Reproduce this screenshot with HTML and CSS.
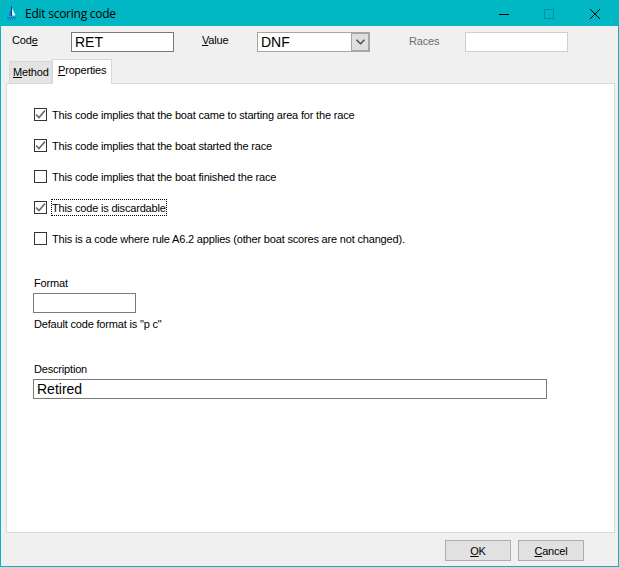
FILE: index.html
```html
<!DOCTYPE html>
<html lang="en">
<head>
<meta charset="utf-8">
<title>Edit scoring code</title>
<link rel="stylesheet" href="styles.css">
</head>
<body>
<div class="window">
  <header class="titlebar">
    <svg class="appicon" width="16" height="16" viewBox="0 0 16 16"><path d="M7 1.5 L8 1.5 L8 11 L7 11 Z" fill="#1a2fb0"/><path d="M8 3 L11.5 10.5 L8 10.5 Z" fill="#f4f8ff"/><path d="M6.5 4 L6.5 10.5 L5 10.5 Z" fill="#2a46d0"/><path d="M3 12.5 H12 M4 14 H11" stroke="#2a46d0" stroke-width="1" stroke-dasharray="1 1"/></svg>
    <span class="title">Edit scoring code</span>
    <div class="winbtns">
      <svg class="winbtn" width="46" height="25" viewBox="0 0 46 25"><path d="M18 13.5 H28" stroke="#000"/></svg>
      <svg class="winbtn" width="46" height="25" viewBox="0 0 46 25"><rect x="17.5" y="8.5" width="9" height="9" fill="none" stroke="#0092a0"/></svg>
      <svg class="winbtn" width="46" height="25" viewBox="0 0 46 25"><path d="M17 8 L27 18 M27 8 L17 18" stroke="#000" fill="none"/></svg>
    </div>
  </header>
  <div class="toprow">
    <label class="lbl lbl-code">Cod<u>e</u></label>
    <div class="field field-code">RET</div>
    <label class="lbl lbl-value"><u>V</u>alue</label>
    <div class="combo">
      <span class="combo-text">DNF</span>
      <span class="combo-btn"><svg width="9" height="6" viewBox="0 0 9 6"><path d="M0.5 0.8 L4.5 4.8 L8.5 0.8" fill="none" stroke="#444" stroke-width="1.3"/></svg></span>
    </div>
    <label class="lbl lbl-races">Races</label>
    <div class="field field-races"></div>
  </div>
  <div class="tabs">
    <div class="tab tab-off"><u>M</u>ethod</div>
    <div class="tab tab-on"><u>P</u>roperties</div>
  </div>
  <main class="page">
    <div class="checks">
      <div class="check"><span class="box"><svg width="11" height="11" viewBox="0 0 11 11"><path d="M1 5.5 L4 8.5 L10 1.5" fill="none" stroke="#666" stroke-width="1.6"/></svg></span><span class="txt">This code implies that the boat came to starting area for the race</span></div>
      <div class="check"><span class="box"><svg width="11" height="11" viewBox="0 0 11 11"><path d="M1 5.5 L4 8.5 L10 1.5" fill="none" stroke="#666" stroke-width="1.6"/></svg></span><span class="txt">This code implies that the boat started the race</span></div>
      <div class="check"><span class="box"></span><span class="txt">This code implies that the boat finished the race</span></div>
      <div class="check"><span class="box"><svg width="11" height="11" viewBox="0 0 11 11"><path d="M1 5.5 L4 8.5 L10 1.5" fill="none" stroke="#666" stroke-width="1.6"/></svg></span><span class="txt focused">This code is discardable</span></div>
      <div class="check"><span class="box"></span><span class="txt">This is a code where rule A6.2 applies (other boat scores are not changed).</span></div>
    </div>
    <div class="format">
      <div class="cap">Format</div>
      <div class="field field-format"></div>
      <div class="hint">Default code format is "p c"</div>
    </div>
    <div class="desc">
      <div class="cap">Description</div>
      <div class="field field-desc">Retired</div>
    </div>
  </main>
  <footer class="footer">
    <button class="btn btn-ok"><u>O</u>K</button>
    <button class="btn btn-cancel"><u>C</u>ancel</button>
  </footer>
</div>
</body>
</html>
```
FILE: styles.css
```css
* { box-sizing: border-box; }
html, body { margin: 0; padding: 0; }
body { width: 619px; height: 567px; overflow: hidden; font-family: "Liberation Sans", Arial, sans-serif; font-size: 11px; letter-spacing: -0.18px; color: #000; }
.window { width: 619px; height: 567px; background: #f0f0f0; border: 1px solid #00b7c3; border-top: 0; display: flex; flex-direction: column; }
.titlebar { height: 26px; background: #00b7c3; display: flex; align-items: center; margin: 0 -1px; padding-left: 4px; flex: none; }
.appicon { flex: none; }
.title { font-family: "Open Sans", sans-serif; font-size: 12px; letter-spacing: -0.25px; margin-left: 5px; color: #000; }
.winbtns { margin-left: auto; display: flex; }
.winbtn { display: block; }
.toprow { display: flex; align-items: flex-start; height: 31px; padding: 6px 0 0 11px; flex: none; }
.lbl { line-height: 14px; padding-top: 1px; }
.lbl-code { width: 59px; }
.lbl-value { width: 55px; margin-left: 28px; }
.lbl-races { width: 56px; margin-left: 39px; color: #6d6d6d; padding-top: 2px; }
.field { background: #fff; border: 1px solid #7a7a7a; font-size: 14px; letter-spacing: 0; line-height: 18px; padding-left: 3px; height: 20px; }
.field-code { width: 103px; }
.field-races { width: 103px; border-color: #cfcfcf; }
.combo { width: 113px; height: 20px; background: #fff; border: 1px solid #a6a6a6; display: flex; font-size: 14px; letter-spacing: 0; line-height: 18px; padding-left: 3px; }
.combo-text { flex: 1; }
.combo-btn { width: 19px; height: 20px; margin: -1px -1px 0 0; background: #dedede; border: 2px solid #a6a6a6; border-left-width: 1px; display: flex; align-items: center; justify-content: center; }
.tabs { display: flex; align-items: flex-end; height: 26px; padding-left: 8px; flex: none; position: relative; z-index: 1; }
.tab { border: 1px solid #d9d9d9; border-bottom: 0; }
.tab-off { height: 22px; width: 43px; background: #e3e3e3; padding: 3px 0 0 3px; line-height: 14px; white-space: nowrap; overflow: hidden; }
.tab-on { height: 25px; width: 60px; background: #fff; padding: 3px 0 0 5px; margin-bottom: -1px; line-height: 14px; }
.page { margin: 0 3px 0 5px; height: 450px; background: #fff; border: 1px solid #d9d9d9; padding: 24px 0 0 27px; flex: none; }
.checks { display: flex; flex-direction: column; gap: 18px; }
.check { display: flex; align-items: center; height: 13px; gap: 5px; line-height: 13px; white-space: nowrap; }
.box { width: 13px; height: 13px; border: 1px solid #333; background: #fff; display: flex; align-items: center; justify-content: center; flex: none; }
.txt { padding-top: 2px; }
.focused { outline: 1px dotted #000; }
.format { margin-top: 31px; margin-left: -1px; }
.cap { line-height: 14px; padding-left: 1px; }
.field-format { width: 103px; margin-top: 3px; }
.hint { margin-top: 4px; line-height: 14px; padding-left: 1px; }
.desc { margin-top: 31px; margin-left: -1px; }
.field-desc { width: 514px; margin-top: 3px; }
.footer { display: flex; padding: 7px 0 0 444px; gap: 7px; }
.btn { height: 21px; background: #e1e1e1; border: 1px solid #adadad; font: 11px/19px "Liberation Sans", Arial, sans-serif; letter-spacing: -0.18px; color: #000; padding: 1px 0 0; }
.btn-ok { width: 66px; }
.btn-cancel { width: 66px; }
```
